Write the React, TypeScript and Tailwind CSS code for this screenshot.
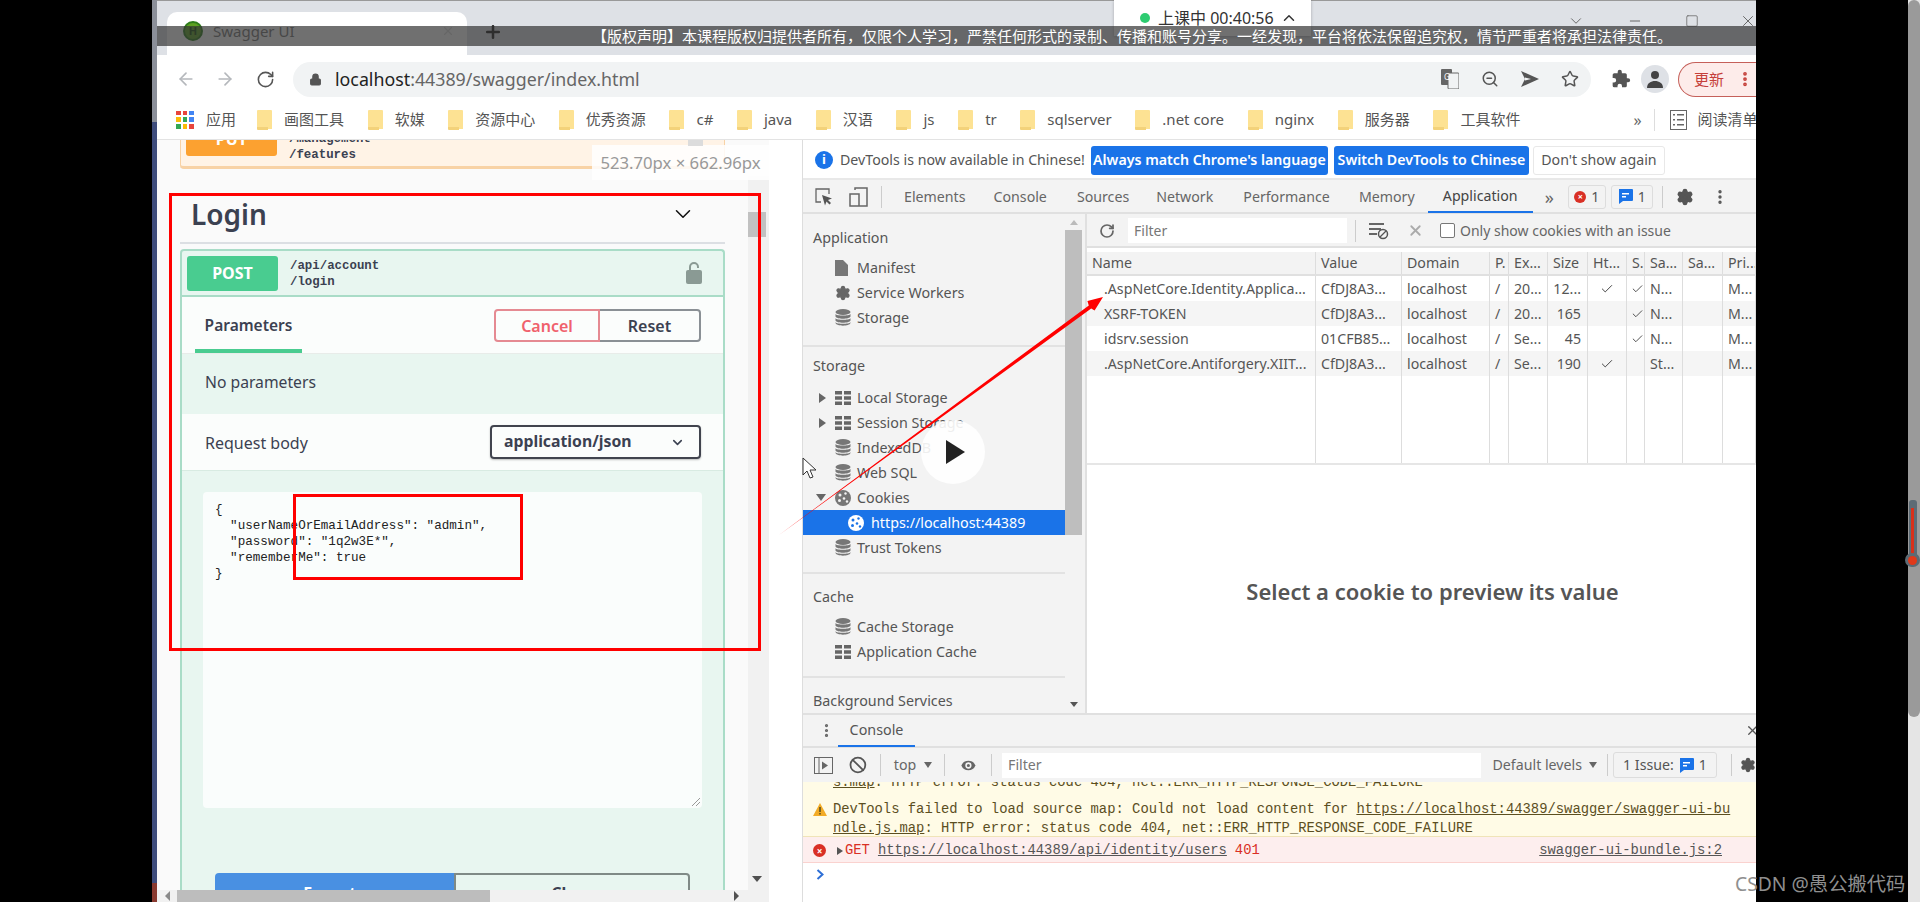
import type { ReactNode } from "react";
import { ArrowLeft, ArrowRight, ChevronDown, ChevronUp, Eye, Lock, MoreVertical, RotateCw, Settings, Star, X, ZoomOut, Plus, Minus, Square, Ban, Check } from "lucide-react";

const cjk = "font-['Noto_Sans','Noto_Sans_CJK_SC',sans-serif]";

function Folder() {
  return (
    <svg width="15" height="20" viewBox="0 0 15 20" className="shrink-0">
      <path d="M1 0h13a1 1 0 0 1 1 1v18H1a1 1 0 0 1-1-1V1a1 1 0 0 1 1-1z" fill="#fde293" />
      <path d="M0 17h11v3H1a1 1 0 0 1-1-1z" fill="#f3d27a" />
    </svg>
  );
}

function Bookmark({ label }: { label: string }) {
  return (
    <div className="flex items-center gap-3">
      <Folder />
      <span className="whitespace-nowrap text-[15px] text-[#555]">{label}</span>
    </div>
  );
}

function Db({ color = "#777" }: { color?: string }) {
  return (
    <svg width="16" height="17" viewBox="0 0 16 17" className="shrink-0">
      <ellipse cx="8" cy="3" rx="7.5" ry="3" fill={color} />
      <path d="M.5 5c1 2 14 2 15 0v2.5c-1 3-14 3-15 0zM.5 9.200c1 2 14 2 15 0v2.300c-1 3-14 3-15 0zM.5 13.200c1 2 14 2 15 0V14c-1 3.500-14 3.500-15 0z" fill={color} />
    </svg>
  );
}

function Tbl() {
  return (
    <svg width="16" height="14" viewBox="0 0 16 14" className="shrink-0">
      <path d="M0 0h7v3.600H0zM9 0h7v3.600H9zM0 5.200h7v3.600H0zM9 5.200h7v3.600H9zM0 10.400h7V14H0zM9 10.400h7V14H9z" fill="#666" />
    </svg>
  );
}

function CookieIcon({ fg = "#777", hole = "#f3f3f3" }: { fg?: string; hole?: string }) {
  return (
    <svg width="16" height="16" viewBox="0 0 16 16" className="shrink-0">
      <circle cx="8" cy="8" r="8" fill={fg} />
      <circle cx="5" cy="5" r="1.500" fill={hole} />
      <circle cx="10.500" cy="3.500" r="1.200" fill={hole} />
      <circle cx="4.500" cy="10.500" r="1.500" fill={hole} />
      <circle cx="9" cy="8.500" r="1.300" fill={hole} />
      <circle cx="12" cy="11.500" r="1.200" fill={hole} />
    </svg>
  );
}

function TreeRow({ icon, arrow, label }: { icon: ReactNode; arrow?: "right" | "down"; label: string }) {
  return (
    <div className="flex h-[25px] items-center text-[14.3px] text-[#555]">
      <span className="flex w-[32px] justify-end pr-[9px]">
        {arrow === "right" && <span className="h-0 w-0 border-y-[5px] border-l-[7px] border-y-transparent border-l-[#666]" />}
        {arrow === "down" && <span className="h-0 w-0 border-x-[5px] border-t-[7px] border-x-transparent border-t-[#666]" />}
      </span>
      <span className="flex w-[22px] items-center">{icon}</span>
      <span className="whitespace-nowrap">{label}</span>
    </div>
  );
}

function SideHead({ label }: { label: string }) {
  return <div className="flex h-[32px] items-center pl-[10px] text-[14.3px] text-[#555]">{label}</div>;
}

const cols = "grid-cols-[229px_86px_88px_19px_39px_40px_39px_18px_38px_40px_1fr]";

const head = ["Name", "Value", "Domain", "P.", "Ex...", "Size", "Ht...", "S.", "Sa...", "Sa...", "Pri..."];
const rows = [
  [".AspNetCore.Identity.Applica...", "CfDJ8A3...", "localhost", "/", "20...", "12...", "✓", "✓", "N...", "", "M..."],
  ["XSRF-TOKEN", "CfDJ8A3...", "localhost", "/", "20...", "165", "", "✓", "N...", "", "M..."],
  ["idsrv.session", "01CFB85...", "localhost", "/", "Se...", "45", "", "✓", "N...", "", "M..."],
  [".AspNetCore.Antiforgery.XIIT...", "CfDJ8A3...", "localhost", "/", "Se...", "190", "✓", "", "St...", "", "M..."],
];

function Cell({ children, index }: { children?: ReactNode; index: number }) {
  const pad = index === 0 ? "pl-[17px]" : index === 6 ? "justify-center" : index === 5 ? "justify-end pr-[6px]" : index === 7 ? "pl-[4px]" : "pl-[5px]";
  return <div className={`flex items-center overflow-hidden whitespace-nowrap border-r border-[#ddd] text-[14.2px] text-[#555] ${pad}`}>{children}</div>;
}

function IssueGlyph() {
  return (
    <svg width="15" height="15" viewBox="0 0 15 15" className="shrink-0">
      <path d="M1 0h13a1 1 0 0 1 1 1v10a1 1 0 0 1-1 1H5l-4 3z" fill="#1a73e8" />
      <path d="M4 4h7v1.500H4zM4 7h4v1.500H4z" fill="#fff" />
    </svg>
  );
}

function Sep() {
  return <span className="block h-[22px] w-px bg-[#ccc]" />;
}

export default function App() {
  return (
    <div className={`relative flex h-[902px] w-[1920px] overflow-hidden bg-black ${cjk}`}>
      <div className="ml-[152px] flex w-[5px] flex-col">
        <div className="h-[122px] bg-[#8b8f99]" />
        <div className="flex-1 bg-[#3e4c7c]" />
        <div className="h-[19px] bg-[#8a3a30]" />
      </div>

      {/* browser window */}
      <div className="flex w-[1599px] flex-col bg-white">
        {/* tab strip */}
        <div className="flex h-[55px] items-end border-t border-[#999] bg-[#dee1e6]">
          <div className="ml-[10px] flex h-[43px] w-[300px] items-center rounded-t-[10px] bg-white pb-[5px] pl-[16px] pr-[12px]">
            <span className="flex h-[20px] w-[20px] items-center justify-center rounded-full border-2 border-[#2e7d1a] bg-[#5da022] text-[11px] font-bold text-[#1b4d0f]">H</span>
            <span className="ml-[10px] flex-1 text-[15px] text-[#777]">Swagger UI</span>
            <X size={14} color="#ddd" />
          </div>
          <Plus size={20} strokeWidth={3} color="#222" className="mb-[13px] ml-[16px]" />
          <div className="mb-[25px] ml-auto flex items-center text-[#666]">
            <ChevronDown size={18} strokeWidth={1.3} />
            <Minus size={16} strokeWidth={1.5} className="ml-[42px]" />
            <Square size={14} strokeWidth={1.3} className="ml-[42px]" />
            <X size={18} strokeWidth={1.3} className="ml-[40px] mr-[-1px]" />
          </div>
        </div>

        {/* toolbar */}
        <div className="flex h-[48px] items-center">
          <ArrowLeft size={20} color="#b5b8bc" className="ml-[19px]" />
          <ArrowRight size={20} color="#b5b8bc" className="ml-[19px]" />
          <RotateCw size={19} color="#555" className="ml-[21px]" />
          <div className="ml-[18px] flex h-[35px] w-[1298px] items-center rounded-full bg-[#f1f3f4] pl-[16px]">
            <Lock size={13} color="#555" fill="#555" />
            <span className="ml-[13px] text-[17.8px] text-[#666]">
              <span className="text-[#222]">localhost</span>:44389/swagger/index.html
            </span>
            <div className="ml-auto flex items-center gap-[22px] pr-[12px] text-[#555]">
              <svg width="18" height="20" viewBox="0 0 18 20">
                <rect x="0" y="0" width="11" height="16" rx="1" fill="#666" />
                <rect x="7" y="4" width="11" height="16" rx="1" fill="#f1f3f4" stroke="#666" />
                <text x="3" y="11" fontSize="8" fill="#fff">G</text>
              </svg>
              <ZoomOut size={18} />
              <svg width="18" height="16" viewBox="0 0 18 16"><path d="M0 0l18 8-18 8 4-8zM4 6.500v3l6-1.500z" fill="#555" fillRule="evenodd" /></svg>
              <Star size={18} />
            </div>
          </div>
          <svg width="20" height="20" viewBox="0 0 24 24" className="ml-[20px]"><path d="M20.500 11H19V7a2 2 0 0 0-2-2h-4V3.500a2.500 2.500 0 0 0-5 0V5H4a2 2 0 0 0-2 2v3.800h1.500a2.700 2.700 0 0 1 0 5.400H2V20a2 2 0 0 0 2 2h3.800v-1.500a2.700 2.700 0 0 1 5.400 0V22H17a2 2 0 0 0 2-2v-4h1.500a2.500 2.500 0 0 0 0-5z" fill="#555" /></svg>
          <div className="ml-[10px] flex h-[28px] w-[28px] items-center justify-center overflow-hidden rounded-full bg-[#dee1e6]">
            <svg width="18" height="18" viewBox="0 0 18 18"><circle cx="9" cy="5" r="4" fill="#444" /><path d="M1 18c0-5 4-7 8-7s8 2 8 7z" fill="#444" /></svg>
          </div>
          <div className="ml-[9px] flex h-[35px] flex-1 items-center rounded-l-full border border-r-0 border-[#c5605a] bg-[#fdecea] pl-[15px] text-[15px] text-[#c5403a]">
            更新
            <MoreVertical size={18} strokeWidth={3} color="#c5403a" className="ml-[12px]" />
          </div>
        </div>

        {/* bookmarks */}
        <div className="flex h-[37px] items-center overflow-hidden border-b border-[#e3e3e3] pb-[3px] pl-[19px]">
          <div className="mr-[21px] flex shrink-0 items-center gap-[12px]">
            <div className="grid h-[18px] w-[18px] grid-cols-3 gap-[2px]">
              {["#e8453c", "#e8453c", "#4285f4", "#fbbc05", "#34a853", "#4285f4", "#34a853", "#fbbc05", "#e8453c"].map((c, i) => (
                <span key={i} className={c === "#e8453c" ? "bg-[#e8453c]" : c === "#4285f4" ? "bg-[#4285f4]" : c === "#fbbc05" ? "bg-[#fbbc05]" : "bg-[#34a853]"} />
              ))}
            </div>
            <span className="whitespace-nowrap text-[15px] text-[#555]">应用</span>
          </div>
          <div className="flex shrink-0 items-center gap-[23.6px]">
            {["画图工具", "软媒", "资源中心", "优秀资源", "c#", "java", "汉语", "js", "tr", "sqlserver", ".net core", "nginx", "服务器", "工具软件"].map((b) => (
              <Bookmark key={b} label={b} />
            ))}
          </div>
          <span className="ml-[113px] shrink-0 text-[16px] text-[#666]">»</span>
          <span className="ml-[12px] h-[22px] w-px shrink-0 bg-[#ddd]" />
          <svg width="17" height="20" viewBox="0 0 17 20" className="ml-[15px] shrink-0">
            <rect x=".5" y=".5" width="16" height="19" fill="none" stroke="#666" />
            <path d="M3 4h2v1.500H3zM7 4h7v1.500H7zM3 9h2v1.500H3zM7 9h7v1.500H7zM3 14h2v1.500H3zM7 14h7v1.500H7z" fill="#666" />
          </svg>
          <span className="ml-[11px] shrink-0 whitespace-nowrap text-[15px] text-[#555]">阅读清单</span>
        </div>

        {/* page + devtools */}
        <div className="flex min-h-0 flex-1">
          {/* swagger page */}
          <div className="relative flex w-[612px] shrink-0 flex-col overflow-hidden bg-[#fafafa]">
            <div className="flex min-h-0 flex-1">
              <div className="min-w-0 flex-1 overflow-hidden pl-[23px] pr-[23px]">
                <div className="flex h-[29px] items-end overflow-hidden rounded-b-[4px] border border-t-0 border-[#f8d2a5] border-b-[3px] bg-[#fff3e6] pb-[10px] pl-[5px]">
                  <div className="flex h-[35px] w-[91px] shrink-0 items-center justify-center rounded-[3px] bg-[#fca130] text-[16px] font-bold text-white">PUT</div>
                  <div className="mb-[-7px] ml-[12px] font-['Liberation_Mono',monospace] text-[12.4px] font-bold leading-[16px] text-[#3b4151]">
                    <div>/management</div>
                    <div>/features</div>
                  </div>
                </div>

                <div className="mt-[23px] flex h-[52px] items-center border-b-2 border-[#dcdfe3] pb-[6px] pl-[11px] pr-[29px]">
                  <span className="text-[28px] font-semibold text-[#3b4151]">Login</span>
                  <ChevronDown size={26} strokeWidth={1.4} color="#111" className="ml-auto" />
                </div>

                <div className="mt-[5px] rounded-t-[4px] border-x-2 border-t-2 border-[#a9dcc7] bg-[#e8f6f0]">
                  <div className="flex h-[46px] items-center border-b-2 border-[#a9dcc7] pl-[5px] pr-[21px]">
                    <div className="flex h-[35px] w-[91px] items-center justify-center rounded-[3px] bg-[#49cc90] text-[16px] font-bold text-white">POST</div>
                    <div className="ml-[12px] pt-[1px] font-['Liberation_Mono',monospace] text-[12.4px] font-bold leading-[16px] text-[#3b4151]">
                      <div>/api/account</div>
                      <div>/login</div>
                    </div>
                    <svg width="16" height="22" viewBox="0 0 16 22" className="ml-auto">
                      <path d="M4 9V5a4 4 0 0 1 8 0v1" fill="none" stroke="#8a9a94" strokeWidth="2" />
                      <rect x="0" y="8" width="16" height="14" rx="2" fill="#8a9a94" />
                    </svg>
                  </div>

                  <div className="flex h-[57px] border-b border-[#e8ece9] bg-[#fbfdfc] pr-[22px]">
                    <div className="ml-[13px] flex h-[56px] w-[107px] items-center justify-center border-b-4 border-[#49cc90] pt-[5px] text-[15.5px] font-semibold text-[#3b4151]">Parameters</div>
                    <div className="ml-auto mt-[12px] flex h-[33px]">
                      <div className="flex w-[106px] items-center justify-center rounded-l-[4px] border-2 border-[#e58a92] text-[16px] font-semibold text-[#f0616d]">Cancel</div>
                      <div className="flex w-[101px] items-center justify-center rounded-r-[4px] border-2 border-l-0 border-[#8a9095] text-[16px] font-semibold text-[#3b4151]">Reset</div>
                    </div>
                  </div>

                  <div className="flex h-[60px] items-center pb-[3px] pl-[23px] text-[15.7px] text-[#3b4151]">No parameters</div>

                  <div className="flex h-[57px] items-center border-b border-[#d8ebe2] bg-[#fbfdfc] pl-[23px] pr-[22px] text-[16px] text-[#3b4151]">
                    <span className="pt-[2px]">Request body</span>
                    <div className="ml-auto flex h-[34px] w-[211px] items-center justify-between rounded-[4px] border-2 border-[#41444e] pl-[12px] pr-[14px] text-[15.8px] font-bold text-[#3b4151] shadow-[0_1px_2px_rgba(0,0,0,0.25)]">
                      application/json
                      <ChevronDown size={15} strokeWidth={2.5} />
                    </div>
                  </div>

                  <div className="px-[21px] pt-[21px]">
                    <div className="relative h-[316px] w-[499px] rounded-[4px] bg-[#fafdfc] pl-[12px] pt-[10px] font-['Liberation_Mono',monospace] text-[12.6px] leading-[16px] text-[#222]">
                      <pre className="font-['Liberation_Mono',monospace]">{`{
  "userNameOrEmailAddress": "admin",
  "password": "1q2w3E*",
  "rememberMe": true
}`}</pre>
                      <svg width="10" height="10" viewBox="0 0 10 10" className="absolute bottom-[1px] right-[1px]"><path d="M9 1L1 9M9 5L5 9" stroke="#999" /></svg>
                    </div>
                    <div className="ml-[12px] mt-[65px] flex h-[40px] w-[475px]">
                      <div className="flex w-[239px] justify-center rounded-tl-[4px] bg-[#4990e2] pt-[8px] text-[16px] font-bold text-white">Execute</div>
                      <div className="flex flex-1 justify-center rounded-tr-[4px] border-2 border-[#7f8a86] pt-[6px] text-[16px] font-bold text-[#3b4151]">Clear</div>
                    </div>
                  </div>
                </div>
              </div>
              {/* vertical scrollbar */}
              <div className="mt-[36px] flex w-[21px] shrink-0 flex-col bg-[#f1f1f1] pt-[36px]">
                <div className="h-[25px] w-[18px] bg-[#c1c1c1]" />
                <div className="mb-[8px] ml-[4px] mt-auto h-0 w-0 border-x-[5px] border-t-[6px] border-x-transparent border-t-[#505050]" />
              </div>
            </div>
            {/* horizontal scrollbar */}
            <div className="flex h-[12px] shrink-0 items-center bg-[#f1f1f1]">
              <span className="ml-[8px] h-0 w-0 border-y-[5px] border-r-[5px] border-y-transparent border-r-[#888]" />
              <div className="ml-[7px] h-[12px] w-[313px] bg-[#bdbdbd]" />
              <span className="ml-[244px] h-0 w-0 border-y-[5px] border-l-[5px] border-y-transparent border-l-[#505050]" />
            </div>

            <div className="absolute left-[435px] top-[5px] flex h-[35px] w-[177px] items-center justify-center bg-white/85 text-[16.7px] text-[#999]">523.70px × 662.96px</div>
            <div className="absolute left-[531px] top-0 h-[6px] w-[15px] bg-[#dcdcdc]" />
          </div>

          <div className="w-[34px] shrink-0 border-r border-[#ddd] bg-white" />

          {/* devtools */}
          <div className="flex min-w-0 flex-1 flex-col overflow-hidden">
            {/* language info bar */}
            <div className="flex h-[40px] shrink-0 items-center border-b-2 border-[#e8e8e8] bg-white pl-[12px] pt-[2px] text-[14.2px] text-[#555]">
              <span className="flex h-[18px] w-[18px] items-center justify-center rounded-full bg-[#1a73e8] text-[13px] font-bold text-white">i</span>
              <span className="ml-[7px] whitespace-nowrap">DevTools is now available in Chinese!</span>
              <div className="ml-[6px] flex h-[29px] w-[237px] items-center justify-center whitespace-nowrap rounded-[3px] bg-[#1a73e8] text-[14.2px] font-semibold text-white">Always match Chrome's language</div>
              <div className="ml-[6px] flex h-[29px] w-[195px] items-center justify-center whitespace-nowrap rounded-[3px] bg-[#1a73e8] text-[14.2px] font-semibold text-white">Switch DevTools to Chinese</div>
              <div className="ml-[4px] flex h-[29px] w-[132px] items-center justify-center whitespace-nowrap rounded-[3px] border border-[#e8e8e8] text-[14.2px] text-[#555]">Don't show again</div>
            </div>

            {/* panel tabs */}
            <div className="flex h-[34px] shrink-0 items-center border-b-2 border-[#e0e0e0] bg-[#f3f3f3] pt-[1px] text-[14.2px] text-[#666]">
              <svg width="18" height="18" viewBox="0 0 18 18" className="ml-[12px]"><path d="M14 6V1H1v13h5" fill="none" stroke="#666" strokeWidth="1.300" /><path d="M7 7l10 3.500-4 1.500 3 3-1.500 1.500-3-3-1.500 4z" fill="#555" /></svg>
              <svg width="20" height="20" viewBox="0 0 20 20" className="ml-[16px]"><path d="M6 3V1h12v18H1V7h9v12" fill="none" stroke="#666" strokeWidth="1.500" /></svg>
              <span className="ml-[12px] h-[22px] w-px bg-[#ccc]" />
              <div className="ml-[22px] flex items-center">
                <span>Elements</span>
                <span className="ml-[28px]">Console</span>
                <span className="ml-[30px]">Sources</span>
                <span className="ml-[27px]">Network</span>
                <span className="ml-[30px]">Performance</span>
                <span className="ml-[29px]">Memory</span>
                <span className="ml-[13px] mt-[1px] flex h-[32px] w-[105px] items-center justify-center border-b-2 border-[#1a73e8] text-[#444]">Application</span>
              </div>
              <span className="ml-[12px] text-[18px] leading-none">»</span>
              <div className="ml-[14px] flex h-[24px] w-[38px] items-center justify-center gap-[5px] rounded-[3px] border border-[#ddd] text-[#555]">
                <span className="flex h-[12px] w-[12px] items-center justify-center rounded-full bg-[#d93025] text-[9px] font-bold leading-none text-white">×</span>1
              </div>
              <div className="ml-[5px] flex h-[24px] w-[42px] items-center justify-center gap-[5px] rounded-[3px] border border-[#ddd] text-[#555]">
                <IssueGlyph />1
              </div>
              <span className="ml-[9px] h-[22px] w-px bg-[#ccc]" />
              <Settings size={18} fill="#555" color="#555" className="ml-[13px]" />
              <MoreVertical size={18} strokeWidth={2.5} color="#555" className="ml-[17px]" />
            </div>

            <div className="flex min-h-0 flex-1">
              {/* application sidebar */}
              <div className="flex w-[284px] shrink-0 border-r-2 border-[#e0e0e0] bg-[#f3f3f3]">
                <div className="min-w-0 flex-1 overflow-hidden pt-[8px]">
                  <SideHead label="Application" />
                  <div className="pt-[1px]">
                    <TreeRow
                      label="Manifest"
                      icon={<svg width="13" height="16" viewBox="0 0 13 16"><path d="M0 0h8l5 5v11H0z" fill="#777" /></svg>}
                    />
                    <TreeRow label="Service Workers" icon={<Settings size={16} color="#666" fill="#666" />} />
                    <TreeRow label="Storage" icon={<Db />} />
                  </div>
                  <div className="mt-[15px] border-t-2 border-[#e2e2e2] pt-[3px]">
                    <SideHead label="Storage" />
                  </div>
                  <div className="pt-[3px]">
                    <TreeRow arrow="right" label="Local Storage" icon={<Tbl />} />
                    <TreeRow arrow="right" label="Session Storage" icon={<Tbl />} />
                    <TreeRow label="IndexedDB" icon={<Db />} />
                    <TreeRow label="Web SQL" icon={<Db />} />
                    <TreeRow arrow="down" label="Cookies" icon={<CookieIcon />} />
                    <div className="flex h-[25px] items-center bg-[#1a73e8] pl-[45px] text-[14.3px] text-white">
                      <CookieIcon fg="#fff" hole="#1a73e8" />
                      <span className="ml-[7px]">https://localhost:44389</span>
                    </div>
                    <TreeRow label="Trust Tokens" icon={<Db />} />
                  </div>
                  <div className="mt-[12px] border-t-2 border-[#e2e2e2] pt-[7px]">
                    <SideHead label="Cache" />
                  </div>
                  <div className="pt-[1px]">
                    <TreeRow label="Cache Storage" icon={<Db />} />
                    <TreeRow label="Application Cache" icon={<Tbl />} />
                  </div>
                  <div className="mt-[12px] border-t-2 border-[#e2e2e2] pt-[7px]">
                    <SideHead label="Background Services" />
                  </div>
                </div>
                <div className="flex w-[20px] shrink-0 flex-col items-center pr-[3px] pt-[6px]">
                  <span className="h-0 w-0 border-x-[4px] border-b-[5px] border-x-transparent border-b-[#bbb]" />
                  <div className="mt-[5px] h-[305px] w-[17px] bg-[#bebebe]" />
                  <span className="mb-[6px] mt-auto h-0 w-0 border-x-[4px] border-t-[5px] border-x-transparent border-t-[#555]" />
                </div>
              </div>

              {/* cookies pane */}
              <div className="flex min-w-0 flex-1 flex-col bg-white">
                <div className="flex h-[34px] shrink-0 items-center border-b-2 border-[#e0e0e0] bg-[#f3f3f3] pt-[1px] text-[14px] text-[#666]">
                  <RotateCw size={16} strokeWidth={2.6} color="#666" className="ml-[12px]" />
                  <div className="ml-[13px] flex h-[25px] w-[219px] items-center bg-white pl-[6px] text-[#777]">Filter</div>
                  <span className="ml-[8px] h-[22px] w-px bg-[#ccc]" />
                  <svg width="20" height="18" viewBox="0 0 20 18" className="ml-[13px]">
                    <path d="M0 1h15v2H0zM0 6h12v2H0zM0 11h8v2H0z" fill="#666" />
                    <circle cx="14" cy="12" r="4.500" fill="none" stroke="#555" strokeWidth="1.500" />
                    <path d="M11 15l6-6" stroke="#555" strokeWidth="1.300" />
                  </svg>
                  <X size={17} strokeWidth={2.5} color="#aaa" className="ml-[18px]" />
                  <span className="ml-[16px] h-[15px] w-[15px] rounded-[2px] border border-[#777] bg-white" />
                  <span className="ml-[5px] whitespace-nowrap">Only show cookies with an issue</span>
                </div>

                <div className="flex h-[217px] shrink-0 flex-col border-b-2 border-[#e6e6e6] pt-[4px]">
                  <div className={`grid h-[24px] shrink-0 border-b-2 border-[#e0e0e0] bg-[#f3f3f3] ${cols}`}>
                    {head.map((h, i) => (
                      <div key={i} className="flex items-center overflow-hidden whitespace-nowrap border-r border-[#ddd] pl-[5px] text-[14.2px] text-[#555]">{h}</div>
                    ))}
                  </div>
                  {rows.map((r, ri) => (
                    <div key={ri} className={`grid h-[25px] shrink-0 ${cols} ${ri % 2 === 1 ? "bg-[#f5f5f5]" : "bg-white"}`}>
                      {r.map((c, i) => (
                        <Cell key={i} index={i}>
                          {c === "✓" ? <Check size={14} strokeWidth={1.7} color="#444" /> : c}
                        </Cell>
                      ))}
                    </div>
                  ))}
                  <div className={`grid flex-1 ${cols}`}>
                    {head.map((_, i) => (
                      <div key={i} className="border-r border-[#ddd]" />
                    ))}
                  </div>
                </div>

                <div className="flex flex-1 items-center justify-center pl-[22px] pt-[5px] text-[22px] font-semibold text-[#555]">Select a cookie to preview its value</div>
              </div>
            </div>

            {/* console drawer */}
            <div className="flex h-[189px] shrink-0 flex-col border-t-2 border-[#e0e0e0] bg-white">
              <div className="flex h-[33px] shrink-0 items-center border-b-2 border-[#e0e0e0] bg-[#f3f3f3]">
                <MoreVertical size={17} strokeWidth={2.5} color="#666" className="ml-[15px]" />
                <span className="ml-[3px] flex h-[32px] w-[77px] items-center justify-center border-b-2 border-[#1a73e8] text-[14.3px] text-[#555]">Console</span>
                <X size={15} color="#555" className="ml-auto mr-[-4px]" />
              </div>
              <div className="flex h-[34px] shrink-0 items-center bg-[#f3f3f3] text-[14.2px] text-[#666]">
                <svg width="19" height="17" viewBox="0 0 19 17" className="ml-[11px] shrink-0">
                  <rect x=".5" y=".5" width="18" height="16" fill="none" stroke="#666" />
                  <path d="M5 1v15" stroke="#666" />
                  <path d="M8 4.500l6 4-6 4z" fill="#666" />
                </svg>
                <Ban size={18} strokeWidth={2.4} color="#555" className="ml-[16px]" />
                <span className="ml-[13px]"><Sep /></span>
                <span className="ml-[13px]">top</span>
                <span className="ml-[8px] h-0 w-0 border-x-[4px] border-t-[6px] border-x-transparent border-t-[#666]" />
                <span className="ml-[12px]"><Sep /></span>
                <Eye size={19} fill="#666" color="#f3f3f3" className="ml-[14px]" />
                <span className="ml-[13px]"><Sep /></span>
                <div className="ml-[10px] flex h-[25px] w-[484px] items-center bg-white pl-[6px] text-[#777]">Filter</div>
                <span className="ml-[12px] whitespace-nowrap">Default levels</span>
                <span className="ml-[7px] h-0 w-0 border-x-[4px] border-t-[6px] border-x-transparent border-t-[#666]" />
                <span className="ml-[10px]"><Sep /></span>
                <div className="ml-[5px] flex h-[26px] w-[104px] shrink-0 items-center justify-center gap-[5px] rounded-[3px] border border-[#ddd] text-[#555]">
                  1 Issue: <IssueGlyph /> 1
                </div>
                <span className="ml-[14px]"><Sep /></span>
                <Settings size={16} fill="#555" color="#555" className="ml-[8px] shrink-0" />
              </div>
              <div className="relative h-[55px] shrink-0 overflow-hidden border-b border-[#f0e4b8] bg-[#fffbe6] pl-[30px] font-['Liberation_Mono',monospace] text-[13.85px] leading-[19px] text-[#5c4f1f]">
                <div className="mt-[-9px] whitespace-nowrap"><span className="underline">s.map</span>: HTTP error: status code 404, net::ERR_HTTP_RESPONSE_CODE_FAILURE</div>
                <div className="mt-[8px] whitespace-nowrap">DevTools failed to load source map: Could not load content for <span className="underline">https://localhost:44389/swagger/swagger-ui-bu</span></div>
                <div className="whitespace-nowrap"><span className="underline">ndle.js.map</span>: HTTP error: status code 404, net::ERR_HTTP_RESPONSE_CODE_FAILURE</div>
                <svg width="14" height="13" viewBox="0 0 14 13" className="absolute left-[10px] top-[21px]"><path d="M7 0l7 13H0z" fill="#f2ab26" /><path d="M6.200 4h1.600v5H6.200zM6.200 10h1.600v1.500H6.200z" fill="#5c4f1f" /></svg>
              </div>
              <div className="flex h-[26px] shrink-0 items-center border-b border-[#fad2cf] bg-[#fdeeee] pl-[10px] pt-[2px] font-['Liberation_Mono',monospace] text-[13.85px]">
                <span className="flex h-[13px] w-[13px] items-center justify-center rounded-full bg-[#d93025] font-['Noto_Sans',sans-serif] text-[10px] font-bold leading-none text-white">×</span>
                <span className="ml-[11px] h-0 w-0 border-y-[4px] border-l-[6px] border-y-transparent border-l-[#555]" />
                <span className="ml-[2px] text-[#d93025]">GET</span>
                <span className="ml-[8px] text-[#555] underline">https://localhost:44389/api/identity/users</span>
                <span className="ml-[8px] text-[#d93025]">401</span>
                <span className="ml-auto mr-[34px] text-[#555] underline">swagger-ui-bundle.js:2</span>
              </div>
              <div className="flex flex-1 items-start pl-[13px] pt-[6px] text-[#2d6fd6]">
                <svg width="9" height="11" viewBox="0 0 9 11"><path d="M1.500 1l5 4.500-5 4.500" fill="none" stroke="#2d6fd6" strokeWidth="2" /></svg>
              </div>
            </div>
          </div>
        </div>
      </div>

      {/* right side strip */}
      <div className="ml-auto flex w-[12px] flex-col bg-[#e5e5e5]">
        <div className="h-[717px] rounded-[6px] bg-[#9a9a9a]" />
      </div>

      {/* recording overlay */}
      <div className="absolute left-[1114px] top-0 flex h-[36px] w-[197px] items-center bg-white pl-[26px] text-[16px] text-[#333] shadow-[0_1px_3px_rgba(0,0,0,0.25)]">
        <span className="h-[10px] w-[10px] rounded-full bg-[#2ecc71]" />
        <span className="ml-[8px] whitespace-nowrap">上课中 00:40:56</span>
        <ChevronUp size={18} className="ml-[6px]" />
      </div>
      <div className="absolute left-[157px] top-[26px] flex h-[20px] w-[1599px] items-center bg-[#333]/70 pl-[435px] text-[15px] text-white">
        <span className="whitespace-nowrap">【版权声明】本课程版权归提供者所有，仅限个人学习，严禁任何形式的录制、传播和账号分享。一经发现，平台将依法保留追究权，情节严重者将承担法律责任。</span>
      </div>

      {/* red annotations */}
      <div className="absolute left-[169px] top-[193px] h-[458px] w-[592px] border-[3px] border-[#ff0000]" />
      <div className="absolute left-[293px] top-[494px] h-[86px] w-[230px] border-[3px] border-[#ff0000]" />
      <svg width="1920" height="902" className="pointer-events-none absolute left-0 top-0">
        <path d="M779 535L1088.800 305.400L1087.400 301L1103 297L1094.600 310.600L1091.200 308.600Z" fill="#ff0000" />
      </svg>

      {/* video play button */}
      <div className="absolute left-[921px] top-[420px] flex h-[64px] w-[64px] items-center justify-center rounded-full bg-white/90 pl-[5px]">
        <span className="h-0 w-0 border-y-[12px] border-l-[19px] border-y-transparent border-l-[#222]" />
      </div>

      {/* mouse cursor */}
      <svg width="16" height="23" viewBox="0 0 16 23" className="absolute left-[802px] top-[457px]">
        <path d="M1 1v17l4-4 3 7 3-1-3-7h6z" fill="#fff" stroke="#333" />
      </svg>

      {/* watermark */}
      <div className="absolute left-[1735px] top-[870px] whitespace-nowrap text-[19.3px] text-[#8f8f8f]">CSDN @愚公搬代码</div>

      {/* temperature gauge */}
      <div className="absolute left-[1905px] top-[500px] flex h-[68px] w-[15px] flex-col items-center">
        <div className="flex h-[58px] w-[8px] justify-center rounded-t-[3px] bg-[#5c6b75] pt-[8px]">
          <div className="h-full w-[3px] bg-[#d8301a]" />
        </div>
        <div className="mt-[-5px] flex h-[14px] w-[15px] items-center justify-center rounded-full bg-[#5c6b75]">
          <div className="h-[9px] w-[9px] rounded-full bg-[#e0391a]" />
        </div>
      </div>
    </div>
  );
}
